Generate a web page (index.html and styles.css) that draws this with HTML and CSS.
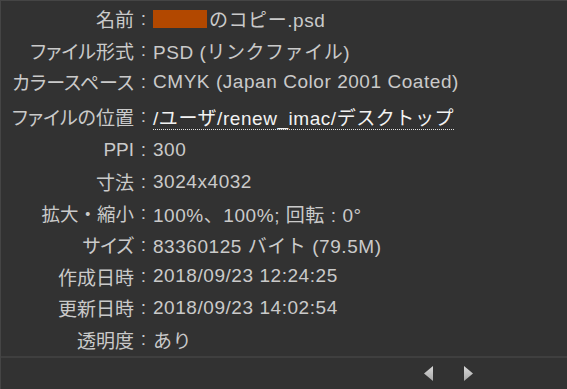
FILE: index.html
```html
<!DOCTYPE html>
<html lang="ja">
<head>
    <meta charset="UTF-8">
    <title>ファイル情報</title>
    <link rel="stylesheet" href="styles.css">
</head>
<body>
    <div class="panel">
        <div class="info">
            <div class="row"><span class="label">名前</span><span class="sep">:</span><span class="value"><span class="masked"></span>のコピー.psd</span></div>
            <div class="row"><span class="label">ファイル形式</span><span class="sep">:</span><span class="value">PSD (リンクファイル)</span></div>
            <div class="row"><span class="label">カラースペース</span><span class="sep">:</span><span class="value">CMYK (Japan Color 2001 Coated)</span></div>
            <div class="row location"><span class="label">ファイルの位置</span><span class="sep">:</span><span class="value"><a class="path" href="#">/ユーザ/renew_imac/デスクトップ</a></span></div>
            <div class="row"><span class="label">PPI</span><span class="sep">:</span><span class="value">300</span></div>
            <div class="row"><span class="label">寸法</span><span class="sep">:</span><span class="value">3024x4032</span></div>
            <div class="row"><span class="label full">拡大・縮小</span><span class="sep">:</span><span class="value">100%、100%; 回転 : 0°</span></div>
            <div class="row"><span class="label">サイズ</span><span class="sep">:</span><span class="value">83360125 バイト (79.5M)</span></div>
            <div class="row"><span class="label">作成日時</span><span class="sep">:</span><span class="value">2018/09/23 12:24:25</span></div>
            <div class="row"><span class="label">更新日時</span><span class="sep">:</span><span class="value">2018/09/23 14:02:54</span></div>
            <div class="row"><span class="label">透明度</span><span class="sep">:</span><span class="value">あり</span></div>
        </div>
        <div class="footer">
            <button class="nav prev" title="前へ"></button>
            <button class="nav next" title="次へ"></button>
        </div>
    </div>
</body>
</html>
```

FILE: styles.css
```css
html, body {
    margin: 0;
    padding: 0;
    background-color: #323232;
}

.panel {
    height: 389px;
    box-sizing: border-box;
    border-top: 1px solid #454545;
    border-left: 1px solid #454545;
    display: flex;
    flex-direction: column;
    font-family: "Liberation Sans", "Noto Sans CJK JP", sans-serif;
    font-size: 19px;
    color: #cacaca;
}

.info {
    padding-top: 2px;
    height: 355px;
    box-sizing: border-box;
}

.row {
    display: grid;
    grid-template-columns: 133px 19px 1fr;
    height: 31.5px;
    align-items: center;
    white-space: nowrap;
}

.row.location {
    height: 37px;
}

.label {
    text-align: right;
    font-feature-settings: "palt";
}

.label.full {
    font-feature-settings: normal;
    font-size: 18.5px;
}

.sep {
    text-align: center;
}

.value {
    letter-spacing: 0.55px;
    display: flex;
    align-items: center;
}

.masked {
    display: inline-block;
    width: 54px;
    height: 18px;
    background-color: #b24800;
    margin-right: 2px;
}

.path {
    color: #f2f2f2;
    text-decoration: underline dotted #e0e0e0;
    text-decoration-thickness: 1px;
    text-underline-offset: 4px;
}

.footer {
    flex: 1;
    border-top: 2px solid #3f3f3f;
    display: flex;
    justify-content: flex-end;
    align-items: center;
    gap: 31px;
    padding-right: 94px;
}

.nav {
    width: 9px;
    height: 15px;
    padding: 0;
    border: none;
    background: linear-gradient(#d8d8d8, #a8a8a8);
    cursor: pointer;
}

.prev {
    clip-path: polygon(100% 0, 100% 100%, 0 50%);
}

.next {
    clip-path: polygon(0 0, 0 100%, 100% 50%);
}
```
